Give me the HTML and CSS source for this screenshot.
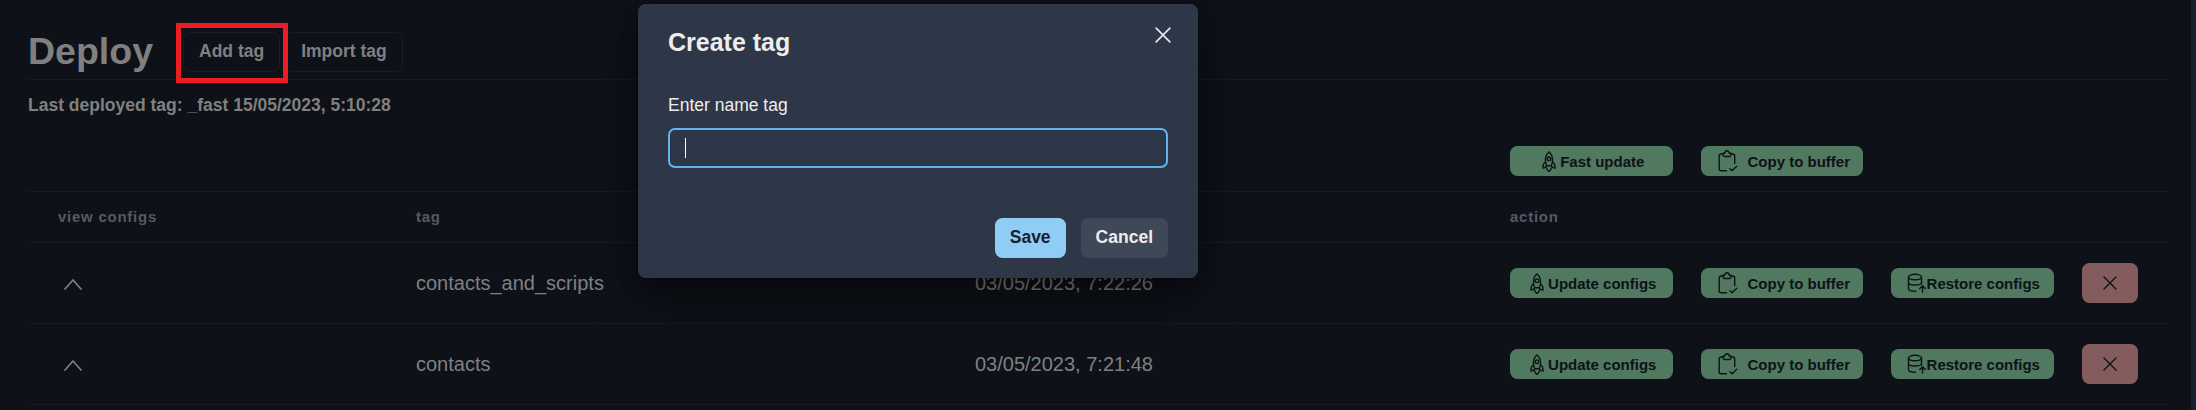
FILE: index.html
```html
<!DOCTYPE html>
<html lang="en">
<head>
<meta charset="utf-8">
<title>Deploy</title>
<link rel="stylesheet" href="styles.css">
</head>
<body>
<svg width="0" height="0" class="sprite">
  <symbol id="rocket" viewBox="0 0 14 21"><path d="M7 .9C4.700 3 3.400 5.700 3.400 8.700c0 2.200.5 4.200 1.400 6h4.400c.9-1.800 1.400-3.800 1.400-6C10.600 5.700 9.300 3 7 .9zM3.400 11C1.500 12.200.8 14 1 17c1.200.3 2.600-.3 3.800-2.300M10.600 11c1.900 1.200 2.600 3 2.400 6-1.200.3-2.600-.3-3.800-2.300M4.700 17c.2 1.600 1 2.900 2.300 3.500 1.300-.6 2.100-1.900 2.300-3.500"/><circle cx="7" cy="7.800" r="1.800"/></symbol>
  <symbol id="clip" viewBox="0 0 20 22"><path d="M5 4H3.300C2 4 1.200 4.800 1.200 6v12.700c0 1.200.8 2 2.100 2H8.500M13.500 4h1.200c1.300 0 2 .8 2 2v7.500M5 3.200h1.700C7 1.600 7.800.8 9 .8s2 .8 2.300 2.400H13v1.600c0 1.100-.6 1.700-1.700 1.700H6.700C5.600 6.500 5 5.900 5 4.800zM12 18.700l2 2 4.800-4.500"/></symbol>
  <symbol id="db" viewBox="0 0 20 20"><ellipse cx="8" cy="4" rx="6.500" ry="2.700"/><path d="M1.500 4v11.500c0 1.700 2.600 2.800 7 2.800M14.500 4v7M1.500 9.500c0 3.400 13 3.400 13 0M15.500 19v-6M12.700 15.500l2.800-2.800 2.800 2.800"/></symbol>
  <symbol id="cross" viewBox="0 0 14 14"><path d="M1 1l12 12M13 1L1 13"/></symbol>
  <symbol id="chevron" viewBox="0 0 18 12"><path d="M1 11l8-9 8 9"/></symbol>
</svg>
<main class="page">
  <header class="head">
    <h1>Deploy</h1>
    <div class="outlined"><button class="outline">Add tag</button><span class="marker"></span></div>
    <button class="outline">Import tag</button>
  </header>
  <p class="last">Last deployed tag: _fast 15/05/2023, 5:10:28</p>
  <section class="table">
    <div class="row tools"><div class="actions">
      <button class="green"><svg class="rocket"><use href="#rocket"/></svg>Fast update</button>
      <button class="green"><svg class="clip"><use href="#clip"/></svg>Copy to buffer</button>
    </div></div>
    <div class="row th"><span>view configs</span><span>tag</span><span></span><span>action</span></div>
    <div class="row td"><span><svg class="chevron"><use href="#chevron"/></svg></span><span>contacts_and_scripts</span><span>03/05/2023, 7:22:26</span>
      <div class="actions">
        <button class="green"><svg class="rocket"><use href="#rocket"/></svg>Update configs</button>
        <button class="green"><svg class="clip"><use href="#clip"/></svg>Copy to buffer</button>
        <button class="green"><svg class="db"><use href="#db"/></svg>Restore configs</button>
        <button class="red"><svg class="cross"><use href="#cross"/></svg></button>
      </div></div>
    <div class="row td"><span><svg class="chevron"><use href="#chevron"/></svg></span><span>contacts</span><span>03/05/2023, 7:21:48</span>
      <div class="actions">
        <button class="green"><svg class="rocket"><use href="#rocket"/></svg>Update configs</button>
        <button class="green"><svg class="clip"><use href="#clip"/></svg>Copy to buffer</button>
        <button class="green"><svg class="db"><use href="#db"/></svg>Restore configs</button>
        <button class="red"><svg class="cross"><use href="#cross"/></svg></button>
      </div></div>
  </section>
</main>
<div class="modal">
  <div class="modal-head"><h2>Create tag</h2><svg class="close"><use href="#cross"/></svg></div>
  <label>Enter name tag</label>
  <div class="field"><span class="caret"></span></div>
  <div class="modal-foot"><button class="save">Save</button><button class="cancel">Cancel</button></div>
</div>
</body>
</html>
```
FILE: styles.css
```css
* { box-sizing: border-box; }
body { margin: 0; height: 410px; overflow: hidden; background: #0e1118; font-family: "Liberation Sans", Arial, sans-serif; color: #808081; position: relative; }
h1, h2, p { margin: 0; }
button { border: 0; margin: 0; font: bold 17.5px "Liberation Sans", Arial, sans-serif; display: flex; align-items: center; justify-content: center; border-radius: 7.5px; color: inherit; white-space: nowrap; }
svg { fill: none; stroke: currentColor; stroke-width: 1.4; stroke-linecap: round; stroke-linejoin: round; flex: none; }
.sprite { position: absolute; }
.page { height: 410px; padding: 0 19px 0 28px; border-right: 5px solid #19202b; }
.head { display: flex; height: 80px; padding-top: 32px; border-bottom: 1px solid #171a20; margin-right: 4px; }
h1 { font-size: 37.5px; line-height: 38px; width: 155px; }
.outline { height: 40px; padding: 0 15px 2px; border: 1px solid #1c1f24; background: transparent; }
.outlined { position: relative; margin-right: 5px; }
.marker { position: absolute; left: -7px; top: -9px; width: 112px; height: 60px; border: 5px solid #ed1c24; }
.last { font-size: 17.5px; font-weight: bold; line-height: 26px; margin-top: 12px; height: 26px; }
.table { margin-right: 4px; }
.row { display: grid; grid-template-columns: 358px 559px 535px 1fr; align-items: center; padding-left: 30px; border-bottom: 1px solid #161b23; }
.tools { height: 74px; }
.tools .actions { grid-column: 4; padding-top: 13px; }
.th { height: 51px; padding-bottom: 2px; font-size: 15px; font-weight: bold; letter-spacing: .75px; color: #535b66; }
.td { height: 81px; font-size: 20px; }
.actions { display: flex; align-items: center; gap: 28px; }
.green { width: 162.5px; height: 30px; padding: 0 0 0 4px; background: #50795f; color: #0e1118; font-size: 15px; }
.red { width: 56px; height: 40px; background: #845c5d; color: #0e1118; }
.rocket { width: 14px; height: 21px; margin-right: 4px; }
.clip { width: 20px; height: 22px; margin-right: 10px; }
.db { width: 20px; height: 20px; margin-left: -2px; }
.cross { width: 14px; height: 14px; }
.chevron { width: 18px; height: 12px; margin-left: 6px; stroke-width: 1.700; }
.modal { position: absolute; left: 638px; top: 4px; width: 560px; height: 274px; padding: 20px 30px; background: #2d3748; border-radius: 7.5px; color: #ededee; box-shadow: 0 0 0 1px rgba(0,0,0,.1), 0 6px 19px rgba(0,0,0,.2), 0 19px 50px rgba(0,0,0,.4); }
.modal-head { display: flex; justify-content: space-between; height: 68px; }
h2 { font-size: 25px; line-height: 37px; }
.close { width: 16px; height: 16px; margin: 3px -3px 0 0; }
label { display: block; font-size: 17.5px; line-height: 26px; }
.field { height: 40px; margin-top: 10px; border: 2px solid #63b3ed; border-radius: 7px; padding: 8px 15px; }
.caret { display: block; width: 1px; height: 20px; background: #fff; }
.modal-foot { display: flex; justify-content: flex-end; gap: 15px; margin-top: 50px; }
.save, .cancel { height: 40px; padding: 0 15px 2px; }
.save { background: #90cdf4; color: #1a202c; }
.cancel { background: #3e4857; }
```
